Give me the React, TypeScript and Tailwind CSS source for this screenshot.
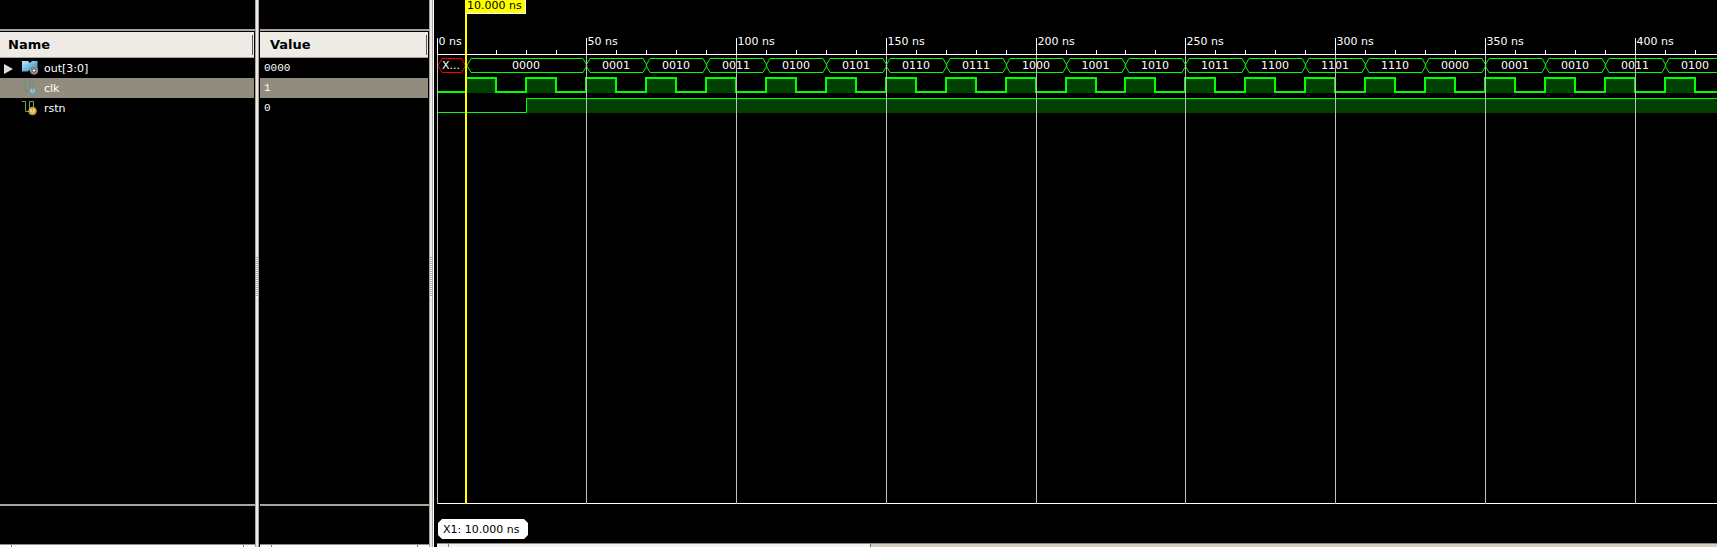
import React from "react";

const S = 29.965;
const px = (t: number) => Math.round(436.3 + S * t);
const buses = ["0001", "0010", "0011", "0100", "0101", "0110", "0111", "1000", "1001", "1010", "1011", "1100", "1101", "1110", "0000", "0001", "0010", "0011", "0100"];
const G = "#00ff00";

function hex(a: number, b: number) {
  return `M${a - 0.5} 65.5L${a + 3.5} 58.5H${b - 3.5}L${b + 0.5} 65.5L${b - 3.5} 72.5H${a + 3.5}Z`;
}

function Waves() {
  const ticks = Array.from({ length: 43 }, (_, i) => i);
  let clk = `M437 92H${px(1)}`;
  for (let t = 1; t < 43; t += 2) clk += `V78H${px(t + 1)}V92H${px(t + 2)}`;
  return (
    <svg width="1280" height="547" viewBox="437 0 1280 547" className="block shrink-0 font-['DejaVu_Sans',sans-serif]" fontSize="11" fill="#fff">
      <g shapeRendering="crispEdges">
        {ticks.filter((t) => t % 2 === 1).map((t) => (
          <rect key={t} x={px(t)} y="78" width={px(t + 1) - px(t)} height="15" fill="#004000" />
        ))}
        <rect x="526" y="98" width="1191" height="15" fill="#004000" />
        <rect x="437" y="54" width="1280" height="1" />
        <rect x="437" y="503" width="1280" height="1" />
        {ticks.filter((t) => t % 5 !== 0).map((t) => (
          <rect key={t} x={px(t)} y="50" width="1" height="4" />
        ))}
      </g>
      <g fill="none" stroke={G}>
        <path d={hex(438.5, 465)} stroke="#ff0000" />
        <path d={hex(467.5, 586.5)} />
        {buses.map((_, i) => <path key={i} d={hex(px(5 + 2 * i) + 0.5, px(7 + 2 * i) + 0.5)} />)}
        <path d={clk} strokeWidth="2" />
        <path d="M437 112.5H526.5V98.5H1717" />
      </g>
      <text x="442" y="69">X...</text>
      <text x="526" y="69" textAnchor="middle">0000</text>
      {buses.map((b, i) => <text key={i} x={(px(5 + 2 * i) + px(7 + 2 * i)) / 2} y="69" textAnchor="middle">{b}</text>)}
      {[0, 5, 10, 15, 20, 25, 30, 35, 40].map((t) => (
        <g key={t}>
          <rect x={t ? px(t) : 437} y="38" width="1" height="17" />
          <rect x={t ? px(t) : 437} y="55" width="1" height="449" fill="#c0c0c0" />
          <text x={(t ? px(t) : 437) + 1.5} y="45">{t * 10} ns</text>
        </g>
      ))}
      <rect x="465" y="0" width="2" height="504" fill="#ffff00" />
      <rect x="465" y="0" width="61" height="14" fill="#fff" />
      <rect x="465" y="0" width="60" height="13" fill="#ffff00" />
      <text x="467" y="9" fill="#000">10.000 ns</text>
      <path d="M442 519H524L528 523V535L524 539H442L438 535V523Z" />
      <text x="443" y="533" fill="#000">X1: 10.000 ns</text>
      <rect x="437" y="543" width="1280" height="1" fill="#8e887e" />
      <rect x="437" y="544" width="433" height="3" fill="#f5f3ef" />
      <rect x="448" y="544" width="1" height="3" fill="#8e887e" />
      <rect x="870" y="544" width="1" height="3" fill="#77716a" />
      <rect x="871" y="544" width="846" height="3" fill="#d5cdc2" />
    </svg>
  );
}

function BusIcon() {
  return (
    <svg width="18" height="18" viewBox="0 0 18 18" className="block">
      <defs><linearGradient id="bus" x2="1" y2="1"><stop stopColor="#c5e8fb" /><stop offset="1" stopColor="#1784cc" /></linearGradient></defs>
      <path d="M0 2H6L8 4L10 2H15.5V12.5H9L7.5 11L6 12.5H0Z" fill="url(#bus)" />
      <circle cx="12" cy="11.5" r="3.8" fill="#444" stroke="#999" />
      <circle cx="12" cy="11.5" r="2.6" fill="none" stroke="#ccc" strokeWidth="0.7" />
      <path d="M10.5 11.5H13.5M12 10V13" stroke="#fff" />
    </svg>
  );
}

function SignalIcon({ dim = false }: { dim?: boolean }) {
  return (
    <svg width="18" height="18" viewBox="0 0 18 18" className="block">
      <path d="M0 2.5H3.5V12.5H7.5V2.5H11.5V8" fill="none" stroke={dim ? "#639078" : "#70a552"} />
      <circle cx="10.5" cy="12" r="3.8" fill={dim ? "#789eac" : "#dfa920"} stroke={dim ? "#719199" : "#b3a173"} />
      <path d="M9 10V12.2Q9 13.3 10.5 13.3Q12 13.3 12 12.2V10" fill="none" stroke={dim ? "#c8dada" : "#fff7d8"} />
    </svg>
  );
}

function Splitter({ className }: { className: string }) {
  return (
    <div className={`flex h-full shrink-0 items-center justify-center border-x border-[#aaa49e] bg-[#eee8e6] pt-[7px] ${className}`}>
      <div className="h-10 w-0.5 bg-[repeating-linear-gradient(#aaa49e_0px_1px,#fff_1px_2px)]" />
    </div>
  );
}

function Panel({ title, children, className, value = false }: { title: string; children: React.ReactNode; className: string; value?: boolean }) {
  return (
    <section className={`flex h-full shrink-0 flex-col ${className}`}>
      <div className="-mr-px h-[31px] shrink-0 border-b-2 border-[#aaa3a1]" />
      <header className={`mt-px flex h-[26px] shrink-0 items-center justify-between border-b border-[#aaa59c] bg-[#eeebe7] pr-px text-[13px] font-bold text-black ${value ? "pl-[10px]" : "pl-2"}`}>
        <span>{title}</span><span className="h-5 w-px bg-[#555]" />
      </header>
      <div className="grow">{children}</div>
      <div className="-mr-px h-10 shrink-0 border-t-2 border-[#aaa59c]" />
      <div className="-mr-px flex h-[3px] shrink-0 justify-between border-t border-[#938d84] bg-white px-[11px]"><i className="w-px bg-[#777]" /><i className="w-px bg-[#777]" /></div>
    </section>
  );
}

export default function App() {
  return (
    <main className="flex h-[547px] w-[1717px] overflow-hidden bg-black font-['DejaVu_Sans',sans-serif] text-[11px] text-white">
      <Panel title="Name" className="w-[254px]">
        <div className="flex h-5 items-center pl-1 pt-0.5"><svg width="9" height="12" viewBox="0 0 9 12"><path d="M0 1L9 6L0 11Z" fill="#ddd" /></svg><span className="mb-0.5 ml-[9px] mr-1"><BusIcon /></span>out[3:0]</div>
        <div className="flex h-5 items-center bg-[#918c7d] pl-[22px] pt-0.5"><span className="mb-0.5"><SignalIcon dim /></span><span className="ml-1">clk</span></div>
        <div className="flex h-5 items-center pl-[22px] pt-0.5"><span className="mb-0.5"><SignalIcon /></span><span className="ml-1">rstn</span></div>
      </Panel>
      <Splitter className="ml-px w-1" />
      <Panel title="Value" value className="ml-px w-[168px]">
        <div className="h-5 pl-1 font-['Liberation_Mono',monospace] leading-[21px]">0000</div>
        <div className="h-5 bg-[#918c7d] pl-1 font-['Liberation_Mono',monospace] leading-[21px]">1</div>
        <div className="h-5 pl-1 font-['Liberation_Mono',monospace] leading-[21px]">0</div>
      </Panel>
      <Splitter className="ml-px w-1" />
      <div className="mr-[3px] w-px bg-white" />
      <Waves />
    </main>
  );
}
